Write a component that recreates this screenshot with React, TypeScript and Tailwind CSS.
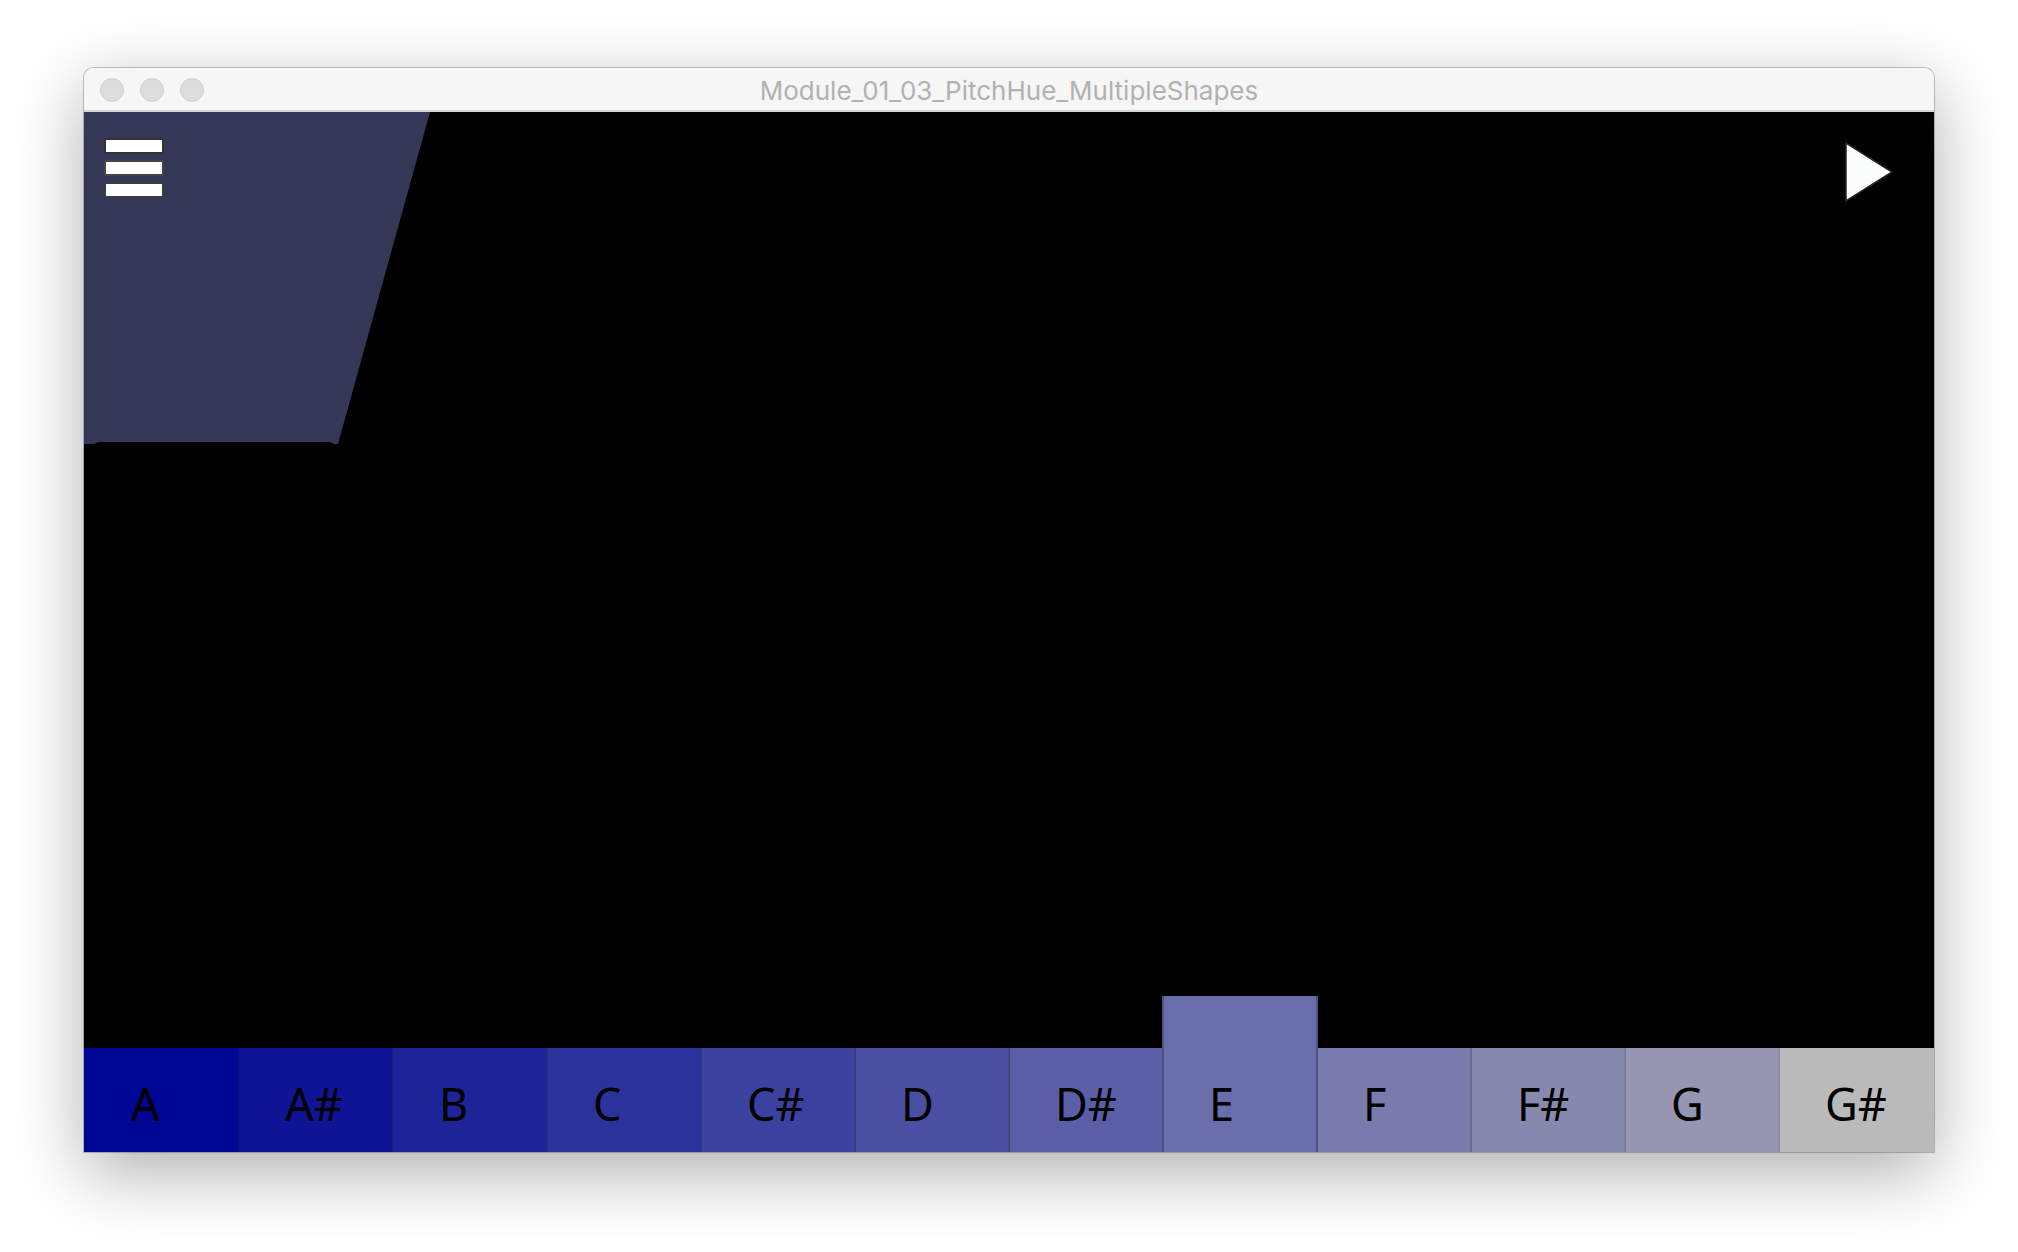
import React from "react";

type Note = { name: string; tone: string };

const notes: Note[] = [
  { name: "A", tone: "bg-[#000694]" },
  { name: "A#", tone: "bg-[#0e1495] border-l-2 border-[#0b1189]" },
  { name: "B", tone: "bg-[#1e2498] border-l-2 border-[#1a1f84]" },
  { name: "C", tone: "bg-[#2c329b] border-l-2 border-[#262b80]" },
  { name: "C#", tone: "bg-[#3b419f] border-l-2 border-[#30357e]" },
  { name: "D", tone: "bg-[#4a4fa1] border-l-2 border-[#3b3e7d]" },
  { name: "D#", tone: "bg-[#5a5ea6] border-l-2 border-[#45477f]" },
  { name: "E", tone: "bg-[#696dab] border-x-2 border-[#4f5182] -mt-[52px] -mr-0.5 z-10" },
  { name: "F", tone: "bg-[#797bad] border-l-2 border-[#595b86]" },
  { name: "F#", tone: "bg-[#8889af] border-l-2 border-[#696a92]" },
  { name: "G", tone: "bg-[#9696b2] border-l-2 border-[#7b7c9f]" },
  { name: "G#", tone: "bg-[#bababa] border-l-2 border-[#9090ab]" },
];

function TitleBar() {
  return (
    <header className="grid h-[44px] grid-cols-[1fr_auto_1fr] items-center border-b-2 border-[#d2d8d8] bg-[#f6f6f6] px-4">
      <div className="flex gap-4 pt-px">
        {["Close", "Minimize", "Zoom"].map((label) => (
          <button
            key={label}
            aria-label={label}
            className="size-6 rounded-full border border-[#cfcfcf] bg-[#dddddd]"
          />
        ))}
      </div>
      <h1 className="pt-1 font-['Inter',sans-serif] text-[26px] leading-8 text-[#b2b2b2]">
        Module_01_03_PitchHue_MultipleShapes
      </h1>
    </header>
  );
}

function MenuButton() {
  return (
    <button aria-label="Menu" className="flex flex-col gap-1.5">
      <span className="h-4 w-[60px] border-2 border-[#352f36] bg-white" />
      <span className="h-4 w-[60px] border-2 border-[#45424a] bg-white" />
      <span className="h-4 w-[60px] border-2 border-[#3d3a40] bg-white" />
    </button>
  );
}

function PlayButton() {
  return (
    <button aria-label="Play">
      <svg viewBox="0 0 48 60" className="h-[60px] w-12">
        <path d="M1 1 L47 30 L1 59 Z" fill="#fbfdfc" stroke="#262424" strokeWidth="1.5" />
      </svg>
    </button>
  );
}

export default function App() {
  return (
    <div className="min-h-screen bg-white px-[84px] pt-[68px] pb-[100px]">
      <main className="overflow-hidden rounded-t-[10px] shadow-[0_0_0_1px_rgba(0,0,0,0.22),0_20px_70px_rgba(0,0,0,0.32)]">
        <TitleBar />
        <section className="relative isolate flex aspect-[1850/1040] flex-col justify-between bg-black">
          <svg viewBox="0 0 1850 1040" className="absolute inset-0 -z-10 size-full" aria-hidden="true">
            <path d="M0 0 H346 L254 332 H250 L246 330 H14 L10 332 H0 Z" fill="#353757" />
          </svg>
          <div className="flex items-start justify-between pt-[26px] pr-[41px] pl-5">
            <MenuButton />
            <div className="pt-1">
              <PlayButton />
            </div>
          </div>
          <div className="grid grid-cols-12 bg-[#bababa] pr-0.5">
            {notes.map(({ name, tone }, i) => (
              <button
                key={name}
                className={`${tone} ${i === 0 ? "pl-[47px]" : "pl-[45px]"} flex min-h-[104px] items-end pb-[18px] text-left font-['Noto_Sans',sans-serif] text-[45px] leading-[60px] text-black`}
              >
                {name}
              </button>
            ))}
          </div>
        </section>
      </main>
    </div>
  );
}
